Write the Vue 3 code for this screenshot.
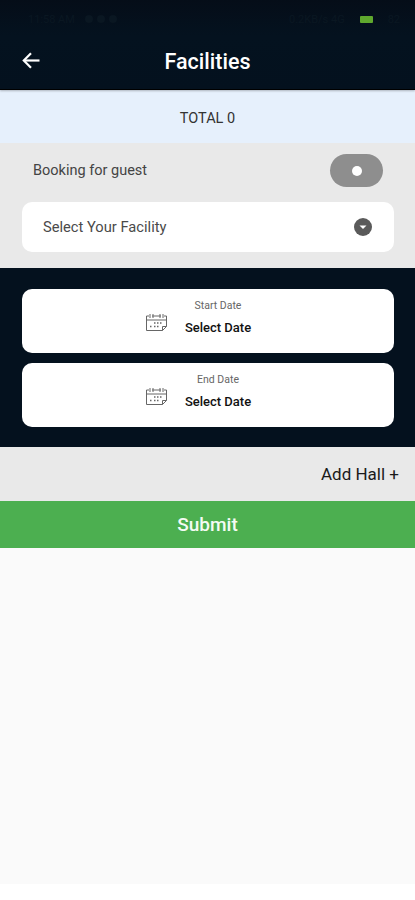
<template>
  <div class="screen">
    <header class="app-bar">
      <div class="status-bar">
        <span class="status-left">
          <span class="status-time">11:58 AM</span>
          <i class="status-dot"></i><i class="status-dot"></i><i class="status-dot"></i>
        </span>
        <span class="status-right">
          <span class="status-net">0.2KB/s 4G</span>
          <i class="battery"></i>
          <span class="status-net">82</span>
        </span>
      </div>
      <div class="title-row">
        <svg class="back" width="18" height="17" viewBox="0 0 18 17" fill="none" stroke="#fff" stroke-width="2.2">
          <path d="M17.500 8.500H2" />
          <path d="M9 1.200 1.800 8.500 9 15.800" />
        </svg>
        <h1>Facilities</h1>
      </div>
    </header>

    <div class="total">TOTAL 0</div>

    <section class="options">
      <div class="guest-row">
        <span>Booking for guest</span>
        <div class="toggle"><i></i></div>
      </div>
      <div class="select-box">
        <span>Select Your Facility</span>
        <svg width="18" height="18" viewBox="0 0 18 18">
          <circle cx="9" cy="9" r="9" fill="#5a5a5a" />
          <path d="M5.500 7.500h7L9 11z" fill="#fff" />
        </svg>
      </div>
    </section>

    <section class="dates">
      <div v-for="d in dates" :key="d" class="date-card">
        <svg class="cal" width="23" height="21" viewBox="0 0 23 21" fill="none" stroke="#666" stroke-width="1">
          <path d="M4 3H1.500v14.500h16l4-4V3H19" />
          <path d="M7 3h9" />
          <path d="M1.500 7h20" />
          <path d="M5 1v4M8 1v4M15 1v4M18 1v4" />
          <path d="M17.500 17.500v-4h4" />
          <path d="M9 10h1.500M12 10h1.500M15 10h1.500M5 13.500h1.500M9 13.500h1.500M12 13.500h1.500" stroke-width="1.300" />
        </svg>
        <div class="date-text">
          <span class="date-label">{{ d }}</span>
          <span class="date-value">Select Date</span>
        </div>
      </div>
    </section>

    <div class="add-hall">Add Hall +</div>
    <button class="submit">Submit</button>
    <div class="empty"></div>
  </div>
</template>

<script setup>
const dates = ['Start Date', 'End Date']
</script>

<style>
body {
  background: #fff;
}
</style>

<style scoped>
.screen {
  width: 415px;
  height: 900px;
  display: flex;
  flex-direction: column;
  font-family: Roboto, "Liberation Sans", sans-serif;
  overflow: hidden;
  background: #fff;
}

.app-bar {
  height: 90px;
  box-sizing: border-box;
  background: linear-gradient(#050d18, #04121f 40%, #04111e);
  border-bottom: 1px solid #000;
  box-shadow: 0 1px 2px rgba(0, 0, 0, 0.25);
  display: flex;
  flex-direction: column;
  z-index: 1;
}

.status-bar {
  height: 38px;
  padding: 0 15px 0 28px;
  display: flex;
  align-items: center;
  justify-content: space-between;
  font-size: 11px;
  color: #0a1722;
}

.status-left,
.status-right {
  display: flex;
  align-items: center;
  gap: 4px;
}

.status-time {
  margin-right: 6px;
}

.status-dot {
  width: 8px;
  height: 8px;
  border-radius: 50%;
  background: #0a1722;
}

.status-right {
  gap: 15px;
}

.battery {
  width: 13px;
  height: 7px;
  border-radius: 1px;
  background: #5fa82e;
}

.title-row {
  flex: 1;
  position: relative;
  display: flex;
  align-items: center;
  justify-content: center;
  padding-bottom: 4px;
}

.back {
  position: absolute;
  left: 22px;
  top: 14px;
}

h1 {
  margin: 0;
  font-size: 21.500px;
  font-weight: 500;
  color: #fff;
}

.total {
  height: 53px;
  box-sizing: border-box;
  padding-top: 3px;
  background: #e6f0fc;
  display: flex;
  align-items: center;
  justify-content: center;
  font-size: 14.500px;
  color: #333;
}

.options {
  height: 125px;
  box-sizing: border-box;
  background: #e9e9e9;
  padding: 11px 21px 0 22px;
}

.guest-row {
  height: 33px;
  display: flex;
  align-items: center;
  justify-content: space-between;
  padding: 0 11px;
  font-size: 14.500px;
  color: #444;
}

.toggle {
  width: 53px;
  height: 33px;
  border-radius: 17px;
  background: #8e8e8e;
  display: flex;
  align-items: center;
  justify-content: center;
}

.toggle i {
  width: 10px;
  height: 10px;
  border-radius: 50%;
  background: #fff;
}

.select-box {
  height: 50px;
  margin-top: 15px;
  background: #fff;
  border-radius: 10px;
  display: flex;
  align-items: center;
  justify-content: space-between;
  padding: 0 22px 0 21px;
  font-size: 14.700px;
  color: #4a4a4a;
}

.dates {
  height: 179px;
  box-sizing: border-box;
  background: #04111e;
  padding: 21px 21px 0 22px;
  display: flex;
  flex-direction: column;
  gap: 10px;
}

.date-card {
  height: 64px;
  background: #fff;
  border-radius: 10px;
  display: flex;
  align-items: center;
  justify-content: center;
  gap: 17px;
  padding-right: 20px;
}

.cal {
  margin-top: 5px;
}

.date-text {
  display: flex;
  flex-direction: column;
  align-items: center;
  gap: 8px;
  margin-bottom: 8px;
}

.date-label {
  font-size: 10.500px;
  color: #666;
}

.date-value {
  font-size: 13px;
  font-weight: 500;
  color: #111;
}

.add-hall {
  height: 54px;
  box-sizing: border-box;
  background: #e9e9e9;
  display: flex;
  align-items: center;
  justify-content: flex-end;
  padding: 0 16px 0 0;
  font-size: 17px;
  color: #1a1a1a;
}

.submit {
  height: 47px;
  border: none;
  padding: 0;
  background: #4caf50;
  color: #f4fbf4;
  font-family: inherit;
  font-size: 19px;
  font-weight: 500;
}

.empty {
  height: 336px;
  background: #fafafa;
}
</style>
